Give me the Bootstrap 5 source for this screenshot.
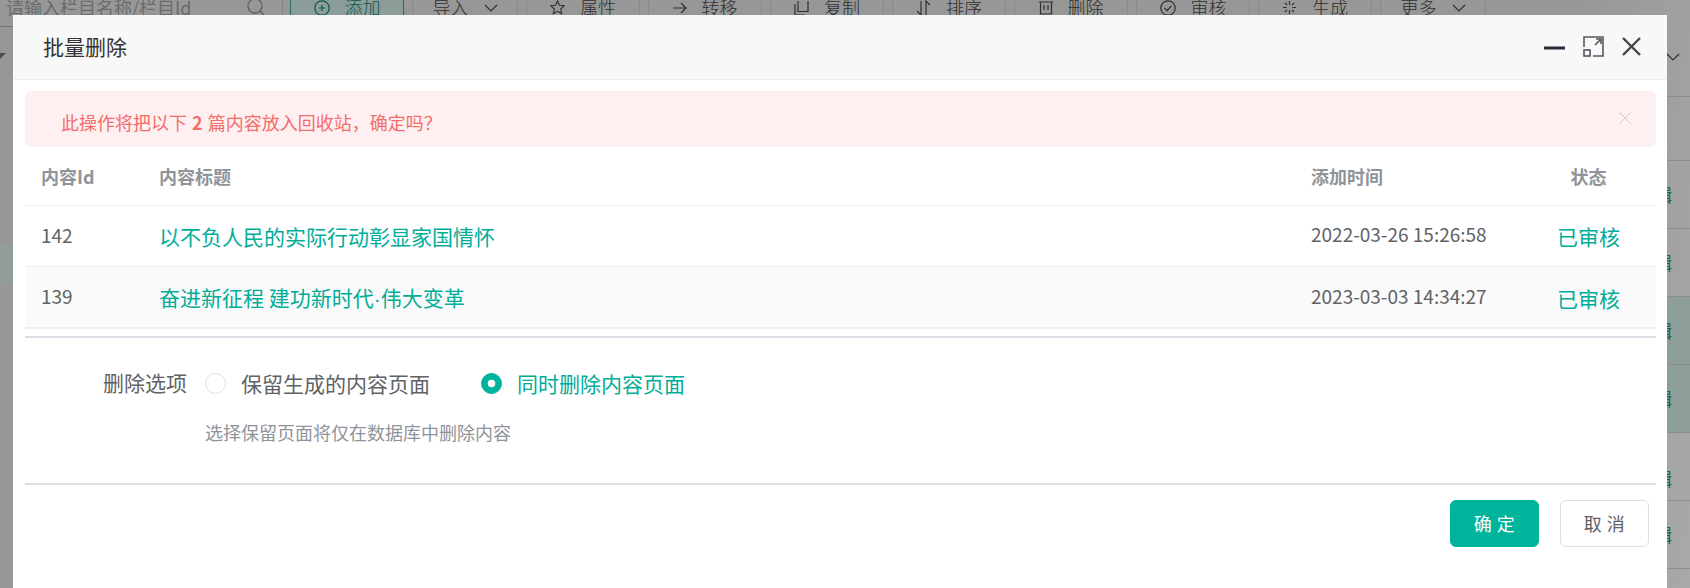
<!DOCTYPE html>
<html lang="zh-CN">
<head>
<meta charset="utf-8">
<title>批量删除</title>
<link href="https://cdn.jsdelivr.net/npm/bootstrap@5.3.0/dist/css/bootstrap.min.css" rel="stylesheet">
<style>
html,body{margin:0;height:100%;overflow:hidden}
body{font-family:"Noto Sans CJK SC","Liberation Sans",sans-serif;font-weight:400;background:#dcdcdc}
.stage{position:relative;width:1690px;height:588px;overflow:hidden;background:linear-gradient(100deg,#d9d9d9 0,#d9d9d9 88%,#f2f2f2 100%)}
/* page behind the dialog */
.tbar{margin-top:-12px;height:38px;color:#444;font-size:18px}
.srch{width:283px;padding:0 17px 0 6px;border-bottom:1px solid #aaa;border-right:1px solid #bbb;color:#9a9a9a;font-size:18px;line-height:38px;white-space:nowrap}
.tbtn{height:38px;margin-left:8px;border:1px solid #c6c6c6;border-bottom:0;border-radius:0;gap:15px;font-size:18px;font-weight:300;color:#444;padding:0;display:flex;align-items:center;justify-content:center;--bs-btn-border-radius:0}
.tbtn-w{width:114px}
.tbtn-n{width:106px}
.tbtn-add{margin-left:7px;border-color:#2e9f90;background:#c8e0dc;color:#0a7f70}
.under{height:562px}
.sidep{width:260px}
.tri{width:0;height:0;margin:27px 0 0 -6px;border-left:6px solid transparent;border-right:6px solid transparent;border-top:6px solid #6f6f72}
.siderow{height:42px;margin-top:185px;background:#d2e0dd}
.mainp{width:1430px}
.mhead{height:71px;padding:27px 10px 0 0;border-bottom:1px solid #c9c9d2}
.mrow{height:68px;padding-right:18px;border-bottom:1px solid #cbcbcb;color:#0a9c8a;font-size:18px}
.mrow-a{height:64px}
.mrow-on{background:#cce2dd}
.mrow-5{padding-top:24px}
.mask{position:absolute;inset:0;background:rgba(0,0,0,.3)}
/* dialog */
.dlg{position:absolute;left:13px;top:15px;width:1654px;height:590px;background:#fff;border-radius:3px 3px 0 0}
.dhead{height:65px;padding:0 26px 2px 30px;background:#f8f8f8;border-bottom:1px solid #ececec}
.dtitle{font-size:21px;color:#333;font-weight:400;margin:0;line-height:1}
.dicons{gap:18px}
.dicons svg{display:block}
.dbody{padding:11px 11px 0 12px}
.tip{height:56px;margin:0;padding:0 25px 0 36px;border:0;border-radius:6px;background:#fef0f0;color:#f56c6c;font-size:18px}
.tip b{font-weight:700;margin:0 1px}
.tiptext{padding-top:7px}
.tipx{margin-top:-3px;line-height:0;color:#c8cbd2}
.dtable.table{table-layout:fixed;width:1631px;margin:0;color:#606266;font-size:18px}
.dtable.table>:not(caption)>*>*{padding:0 16px;border-bottom:1px solid #ebeef5;box-shadow:none;vertical-align:middle;background:transparent;font-weight:400;color:#606266}
.dtable.table>thead>tr>th{height:58px;font-weight:700;color:#909399;padding-top:2px}
.dtable.table>tbody>tr>td{height:61px}
.dtable.table>tbody>tr.r2>td{height:62px;background:#fafafa;border-bottom-width:2px}
.cid{width:118px}
.ctime{width:226px}
.cst{width:135px;text-align:center}
.dtable.table>tbody>tr>.cnum{font-size:19px;padding-bottom:1px}
.dtable.table>:not(caption)>*>.ct{font-size:21px;color:#00ad98;padding-top:3px}
.dtable.table>tbody>tr>.ctime{font-size:19px;padding-bottom:2px}
.middot{font-family:"Liberation Sans",sans-serif}
.rule{height:2px;background:#dddfe7;margin:0;opacity:1;border:0}
.rule-a{margin-top:7px}
.optrow{margin-top:25px;height:40px}
.optlab{width:162px;text-align:right;margin:0 18px 0 0;font-size:21px;color:#606266;padding:0;font-weight:400}
.opt{margin:0 51px 0 0;padding:0;gap:15px;min-height:0;font-size:21px;color:#606266}
.opt .form-check-input{width:21px;height:21px;margin:0;float:none;border:1px solid #dcdfe6;background-color:#fff}
.opt .form-check-input:checked{background-color:#00b39b;border-color:#00b39b;background-size:15px}
.opt .form-check-label{line-height:40px}
.opt-on{color:#00ad98}
.helpt{margin:16px 0 0 180px;font-size:18px;line-height:26px;color:#909399}
.rule-b{margin-top:38px}
.dfoot{margin-top:15px;padding-right:7px;gap:21px}
.bok,.bno{width:89px;height:47px;font-size:18px;border-radius:6px;padding:0;font-weight:400;letter-spacing:.5px}
.bok{background:#00b39b;border:1px solid #00b39b;color:#fff}
.bno{background:#fff;border:1px solid #dcdfe6;color:#606266}
</style>
</head>
<body>
<div class="stage">
  <div class="tbar d-flex align-items-center">
    <div class="srch d-flex align-items-center justify-content-between">
      <span>请输入栏目名称/栏目Id</span>
      <svg width="18" height="18" viewBox="0 0 18 18" fill="none" stroke="#8a8a8a" stroke-width="1.3"><circle cx="8" cy="8" r="7"/><path d="M13 13l4 4"/></svg>
    </div>
    <button class="btn tbtn tbtn-w tbtn-add" type="button">
      <svg width="16" height="16" viewBox="0 0 16 16" fill="none" stroke="#0a7f70" stroke-width="1.2"><circle cx="8" cy="8" r="7.2"/><path d="M5 8h6M8 5v6"/></svg>添加</button>
    <button class="btn tbtn tbtn-n" type="button">导入
      <svg width="14" height="8" viewBox="0 0 14 8" fill="none" stroke="#444" stroke-width="1.2"><path d="M1 1l6 6 6-6"/></svg></button>
    <button class="btn tbtn tbtn-w" type="button">
      <svg width="15" height="15" viewBox="0 0 16 16" fill="none" stroke="#444" stroke-width="1.2"><path d="M8 1l2.1 4.6 5 .6-3.7 3.4 1 5L8 12.1 3.6 14.6l1-5L.9 6.2l5-.6z"/></svg>属性</button>
    <button class="btn tbtn tbtn-w" type="button">
      <svg width="14" height="12" viewBox="0 0 14 12" fill="none" stroke="#444" stroke-width="1.2"><path d="M0 6h13M8 1l5 5-5 5"/></svg>转移</button>
    <button class="btn tbtn tbtn-w" type="button">
      <svg width="15" height="16" viewBox="0 0 15 16" fill="none" stroke="#444" stroke-width="1.2"><path d="M4 1v10.5h10V1M1 4v11h10"/></svg>复制</button>
    <button class="btn tbtn tbtn-w" type="button">
      <svg width="15" height="16" viewBox="0 0 15 16" fill="none" stroke="#444" stroke-width="1.2"><path d="M5 1v14L1 11M10 15V1l4 4"/></svg>排序</button>
    <button class="btn tbtn tbtn-w" type="button">
      <svg width="14" height="15" viewBox="0 0 14 15" fill="none" stroke="#444" stroke-width="1.2"><path d="M0 2h14M1.5 2v12h11V2M5 5v5M9 5v5"/></svg>删除</button>
    <button class="btn tbtn tbtn-w" type="button">
      <svg width="16" height="16" viewBox="0 0 16 16" fill="none" stroke="#444" stroke-width="1.2"><circle cx="8" cy="8" r="7.2"/><path d="M4.5 8l2.6 2.6 4.3-4.8"/></svg>审核</button>
    <button class="btn tbtn tbtn-w" type="button">
      <svg width="15" height="15" viewBox="0 0 16 16" fill="none" stroke="#444" stroke-width="1.3"><path d="M8 1v4M8 11v4M1 8h4M11 8h4M3 3l2.5 2.5M13 3l-2.5 2.5M3 13l2.5-2.5M13 13l-2.5-2.5"/></svg>生成</button>
    <button class="btn tbtn tbtn-n" type="button">更多
      <svg width="14" height="8" viewBox="0 0 14 8" fill="none" stroke="#444" stroke-width="1.2"><path d="M1 1l6 6 6-6"/></svg></button>
  </div>
  <div class="under d-flex justify-content-between">
    <div class="sidep">
      <div class="tri"></div>
      <div class="siderow"></div>
    </div>
    <div class="mainp">
      <div class="mhead d-flex justify-content-end">
        <svg width="14" height="8" viewBox="0 0 14 8" fill="none" stroke="#444" stroke-width="1.2"><path d="M1 1l6 6 6-6"/></svg>
      </div>
      <div class="mrow mrow-a"></div>
      <div class="mrow d-flex align-items-center justify-content-end">编辑</div>
      <div class="mrow d-flex align-items-center justify-content-end">编辑</div>
      <div class="mrow mrow-on d-flex align-items-center justify-content-end">编辑</div>
      <div class="mrow mrow-on d-flex align-items-center justify-content-end">编辑</div>
      <div class="mrow mrow-5 d-flex align-items-center justify-content-end">编辑</div>
      <div class="mrow d-flex align-items-center justify-content-end">编辑</div>
    </div>
  </div>
  <div class="mask"></div>

  <div class="dlg" role="dialog">
    <div class="dhead d-flex align-items-center justify-content-between">
      <h5 class="dtitle">批量删除</h5>
      <div class="dicons d-flex align-items-center">
        <svg width="21" height="21" viewBox="0 0 21 21" fill="none" stroke="#2b2b3d" stroke-width="3"><path d="M0 12h21"/></svg>
        <svg width="21" height="21" viewBox="0 0 21 21" fill="none" stroke="#55555f" stroke-width="1.6"><path d="M1 11V1h19v19H10M12 9l6-6M13 3h5v5"/><rect x="1" y="14" width="6" height="6"/></svg>
        <svg width="19" height="19" viewBox="0 0 19 19" fill="none" stroke="#44444f" stroke-width="2.4"><path d="M1 1l17 17M18 1L1 18"/></svg>
      </div>
    </div>
    <div class="dbody">
      <div class="alert tip d-flex align-items-center justify-content-between" role="alert">
        <span class="tiptext">此操作将把以下 <b>2</b> 篇内容放入回收站，确定吗？</span>
        <span class="tipx"><svg width="12" height="12" viewBox="0 0 12 12" fill="none" stroke="currentColor" stroke-width="1"><path d="M.5.5l11 11M11.5.5l-11 11"/></svg></span>
      </div>
      <table class="table dtable">
        <thead>
          <tr><th class="cid">内容Id</th><th>内容标题</th><th class="ctime">添加时间</th><th class="cst">状态</th></tr>
        </thead>
        <tbody>
          <tr><td class="cnum">142</td><td class="ct">以不负人民的实际行动彰显家国情怀</td><td class="ctime">2022-03-26 15:26:58</td><td class="cst ct">已审核</td></tr>
          <tr class="r2"><td class="cnum">139</td><td class="ct">奋进新征程 建功新时代<span class="middot">·</span>伟大变革</td><td class="ctime">2023-03-03 14:34:27</td><td class="cst ct">已审核</td></tr>
        </tbody>
      </table>
      <hr class="rule rule-a">
      <div class="optrow d-flex align-items-center">
        <label class="form-label optlab mb-0">删除选项</label>
        <div class="form-check opt d-flex align-items-center">
          <input class="form-check-input" type="radio" name="delopt" id="o1">
          <label class="form-check-label" for="o1">保留生成的内容页面</label>
        </div>
        <div class="form-check opt opt-on d-flex align-items-center">
          <input class="form-check-input" type="radio" name="delopt" id="o2" checked>
          <label class="form-check-label" for="o2">同时删除内容页面</label>
        </div>
      </div>
      <div class="helpt">选择保留页面将仅在数据库中删除内容</div>
      <hr class="rule rule-b">
      <div class="dfoot d-flex justify-content-end">
        <button class="btn bok" type="button">确 定</button>
        <button class="btn bno" type="button">取 消</button>
      </div>
    </div>
  </div>
</div>
<script src="https://cdn.jsdelivr.net/npm/bootstrap@5.3.0/dist/js/bootstrap.bundle.min.js"></script>
</body>
</html>
